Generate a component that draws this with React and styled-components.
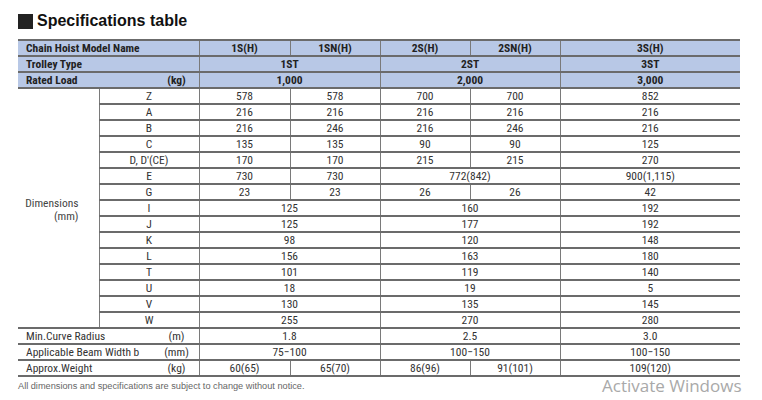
import React from "react";
import styled, { createGlobalStyle } from "styled-components";

const GlobalStyle = createGlobalStyle`
  html, body {
    margin: 0;
    background: #fff;
  }
`;

const NARROW = `"Liberation Sans Narrow", "Roboto Condensed", "DejaVu Sans Condensed", "Liberation Sans", sans-serif`;

const Page = styled.div`
  width: 762px;
  height: 400px;
  box-sizing: border-box;
  padding: 12px 22px 0 18px;
  font-family: ${NARROW};
  position: relative;
  overflow: hidden;
`;

const Title = styled.h2`
  display: flex;
  align-items: center;
  gap: 4px;
  margin: 0 0 9px;
  height: 18px;
  font-family: "Liberation Sans", Arial, sans-serif;
  font-size: 16px;
  font-weight: bold;
  color: #111;
  &::before {
    content: "";
    width: 15px;
    height: 15px;
    background: #222;
  }
`;

const Table = styled.table`
  width: 722px;
  border-collapse: collapse;
  table-layout: fixed;
  font-size: 11.5px;
  color: #333;
  font-stretch: condensed;
`;

const Row = styled.tr`
  height: 16px;
`;

const Cell = styled.td`
  padding: 0;
  height: 14px;
  line-height: 14px;
  text-align: center;
  white-space: nowrap;
  overflow: hidden;
  border-top: 2px solid #6b6b6b;
  border-bottom: 2px solid #6b6b6b;
  border-left: 1.5px solid #7a7a7a;
  border-right: 1.5px solid #7a7a7a;
  background: ${p => (p.$head ? "#b8c8e6" : "#fff")};
  font-weight: ${p => (p.$head ? "bold" : "normal")};
  color: ${p => (p.$head ? "#222" : "#333")};
  &:first-child {
    border-left: none;
  }
  &:last-child {
    border-right: none;
  }
`;

const Label = styled(Cell)`
  text-align: left;
  padding-left: 8px;
`;

const LabelInner = styled.div`
  display: flex;
  justify-content: space-between;
  padding-right: 8px;
`;

const Unit = styled.span`
  width: 28px;
  text-align: center;
`;

const GroupCell = styled.td`
  padding: 4px 20px 0 0;
  text-align: right;
  vertical-align: middle;
  line-height: 13px;
  border: none;
  border-right: 1.5px solid #7a7a7a;
  color: #444;
`;

const Note = styled.p`
  margin: 4px 0 0;
  font-family: "Liberation Sans", Arial, sans-serif;
  font-size: 9.2px;
  color: #666;
`;

const Watermark = styled.div`
  position: absolute;
  left: 602px;
  top: 377px;
  line-height: 18px;
  font-family: "Open Sans", "Noto Sans", sans-serif;
  font-size: 17px;
  color: #a9a9a9;
`;

const heads = [
  { label: "Chain Hoist Model Name", cells: [["1S(H)"], ["1SN(H)"], ["2S(H)"], ["2SN(H)"], ["3S(H)", 1]] },
  { label: "Trolley Type", cells: [["1ST", 2], ["2ST", 2], ["3ST", 1]] },
  { label: "Rated Load", unit: "(kg)", cells: [["1,000", 2], ["2,000", 2], ["3,000", 1]] }
];

// [name, ...values] ; a value of [text, span] spans columns
const dims = [
  ["Z", "578", "578", "700", "700", "852"],
  ["A", "216", "216", "216", "216", "216"],
  ["B", "216", "246", "216", "246", "216"],
  ["C", "135", "135", "90", "90", "125"],
  ["D, D'(CE)", "170", "170", "215", "215", "270"],
  ["E", "730", "730", ["772(842)", 2], "900(1,115)"],
  ["G", "23", "23", "26", "26", "42"],
  ["I", ["125", 2], ["160", 2], "192"],
  ["J", ["125", 2], ["177", 2], "192"],
  ["K", ["98", 2], ["120", 2], "148"],
  ["L", ["156", 2], ["163", 2], "180"],
  ["T", ["101", 2], ["119", 2], "140"],
  ["U", ["18", 2], ["19", 2], "5"],
  ["V", ["130", 2], ["135", 2], "145"],
  ["W", ["255", 2], ["270", 2], "280"]
];

const extras = [
  { label: "Min.Curve Radius", unit: "(m)", cells: [["1.8", 2], ["2.5", 2], "3.0"] },
  { label: "Applicable Beam Width b", unit: "(mm)", cells: [["75\u2212100", 2], ["100\u2212150", 2], "100\u2212150"] },
  { label: "Approx.Weight", unit: "(kg)", cells: ["60(65)", "65(70)", "86(96)", "91(101)", "109(120)"] }
];

const renderValue = (v, i, head) => {
  const [text, span] = Array.isArray(v) ? v : [v, 1];
  return (
    <Cell key={i} colSpan={span} $head={head}>
      {text}
    </Cell>
  );
};

const LabelCell = ({ label, unit, head }) => (
  <Label colSpan={2} $head={head}>
    <LabelInner>
      <span>{label}</span>
      {unit && <Unit>{unit}</Unit>}
    </LabelInner>
  </Label>
);

export default function App() {
  return (
    <>
      <GlobalStyle />
      <Page>
        <Title>Specifications table</Title>
        <Table>
          <colgroup>
            <col style={{ width: 81 }} />
            <col style={{ width: 100 }} />
            <col style={{ width: 91 }} />
            <col style={{ width: 90 }} />
            <col style={{ width: 90 }} />
            <col style={{ width: 90 }} />
            <col style={{ width: 180 }} />
          </colgroup>
          <tbody>
            {heads.map(h => (
              <Row key={h.label}>
                <LabelCell label={h.label} unit={h.unit} head />
                {h.cells.map(([text, span], i) => (
                  <Cell key={i} colSpan={span === 2 ? 2 : 1} $head>
                    {text}
                  </Cell>
                ))}
              </Row>
            ))}
            {dims.map(([name, ...values], r) => (
              <Row key={name}>
                {r === 0 && (
                  <GroupCell rowSpan={dims.length}>
                    Dimensions
                    <br />
                    (mm)
                  </GroupCell>
                )}
                <Cell>{name}</Cell>
                {values.map((v, i) => renderValue(v, i))}
              </Row>
            ))}
            {extras.map(e => (
              <Row key={e.label}>
                <LabelCell label={e.label} unit={e.unit} />
                {e.cells.map((v, i) => renderValue(v, i))}
              </Row>
            ))}
          </tbody>
        </Table>
        <Note>All dimensions and specifications are subject to change without notice.</Note>
        <Watermark>Activate Windows</Watermark>
      </Page>
    </>
  );
}
